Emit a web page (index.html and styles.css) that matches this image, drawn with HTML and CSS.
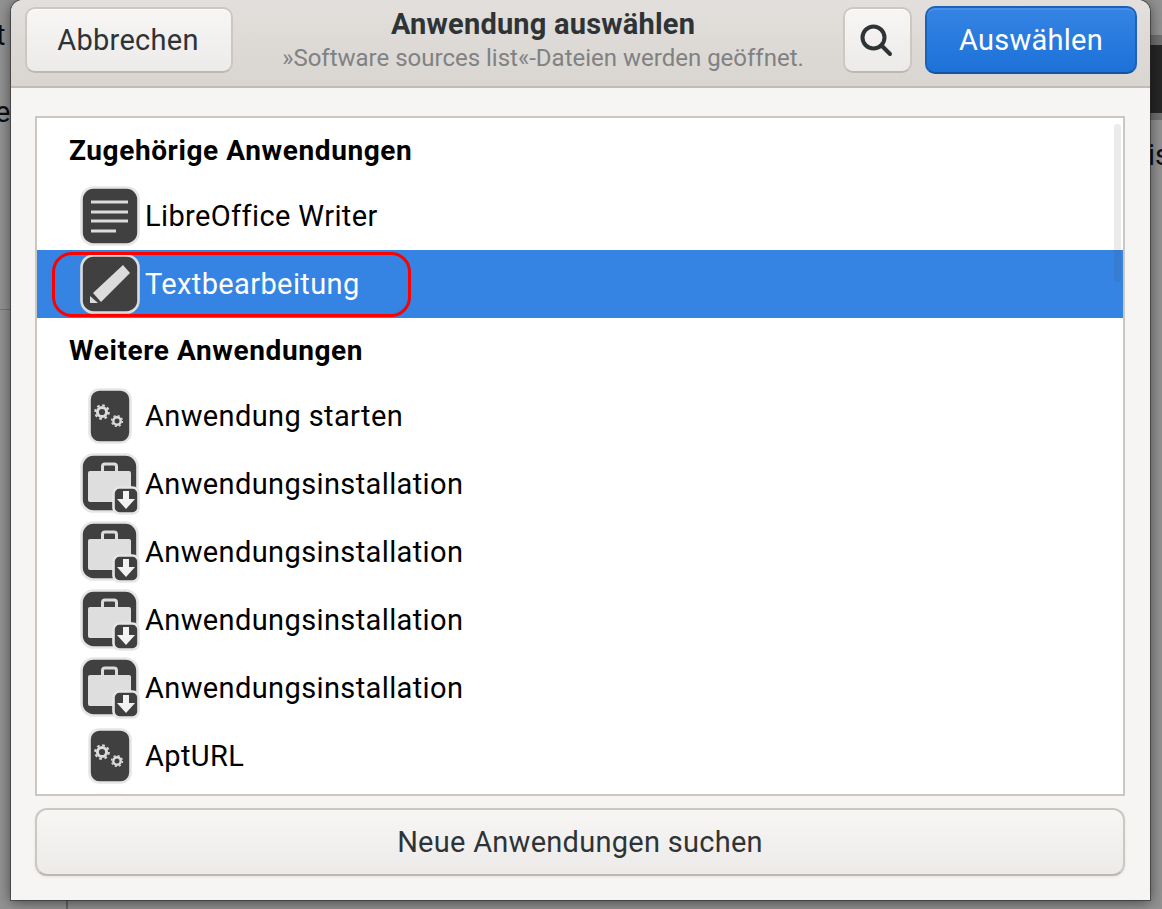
FILE: index.html
```html
<!DOCTYPE html>
<html lang="de">
<head>
  <meta charset="utf-8">
  <title>Anwendung auswählen</title>
  <link rel="stylesheet" href="styles.css">
</head>
<body>
  <!-- Fenster hinter dem Dialog -->
  <div class="backdrop">
    <span class="bg-text bg-t">t</span>
    <span class="bg-text bg-e">e</span>
    <span class="bg-text bg-is">is</span>
    <div class="bg-bar"></div>
    <div class="bg-line"></div>
    <div class="bg-vline"></div>
  </div>

  <svg class="defs" width="0" height="0">
    <symbol id="i-doc" viewBox="0 0 60 60">
      <rect x="1.5" y="1.5" width="57" height="57" rx="12" fill="#404040" stroke="#e6e6e6" stroke-width="2.600"/>
      <path d="M11 16h37M11 26h37M11 35h37M11 45h25" stroke="#dcdcdc" stroke-width="3" fill="none"/>
    </symbol>
    <symbol id="i-pencil" viewBox="0 0 60 60">
      <rect x="1.5" y="1.5" width="57" height="57" rx="12" fill="#404040" stroke="#dcdcdc" stroke-width="2.600"/>
      <path d="M13 39L43 11L50 19L21 48Z" fill="#dcdcdc"/>
      <path d="M10 42V49H18Z" fill="#dcdcdc"/>
    </symbol>
    <symbol id="i-gears" viewBox="0 0 44 56">
      <rect x="1.5" y="1.5" width="41" height="53" rx="10" fill="#404040" stroke="#e6e6e6" stroke-width="2.600"/>
      <circle cx="14" cy="24" r="4.600" fill="none" stroke="#dcdcdc" stroke-width="3"/>
      <circle cx="14" cy="24" r="6.800" fill="none" stroke="#dcdcdc" stroke-width="2" stroke-dasharray="2.700 2.640"/>
      <circle cx="29" cy="33" r="3.700" fill="none" stroke="#dcdcdc" stroke-width="2.400"/>
      <circle cx="29" cy="33" r="5.400" fill="none" stroke="#dcdcdc" stroke-width="1.400" stroke-dasharray="2.100 2.140"/>
    </symbol>
    <symbol id="i-install" viewBox="0 0 60 62">
      <rect x="1.5" y="1.5" width="56" height="57" rx="12" fill="#404040" stroke="#e6e6e6" stroke-width="2.600"/>
      <path d="M22.500 18v-4.500a2.500 2.500 0 0 1 2.500-2.500h9a2.500 2.500 0 0 1 2.500 2.500V18" fill="none" stroke="#dcdcdc" stroke-width="3"/>
      <rect x="8" y="18" width="43" height="31" rx="2" fill="#dedede"/>
      <rect x="33.500" y="34.500" width="25" height="26" rx="6" fill="#404040" stroke="#e6e6e6" stroke-width="2.600"/>
      <path d="M43 38h6v8h6L46 56L37 46h6Z" fill="#f2f2f2"/>
    </symbol>
  </svg>

  <div class="dialog">
    <header class="head">
      <button class="btn btn-cancel">Abbrechen</button>
      <div class="title-box">
        <div class="title">Anwendung auswählen</div>
        <div class="subtitle">»Software sources list«-Dateien werden geöffnet.</div>
      </div>
      <button class="btn btn-search" aria-label="Suchen">
        <svg width="34" height="34" viewBox="0 0 34 34">
          <circle cx="14.500" cy="14.500" r="11" fill="none" stroke="#2e3436" stroke-width="4"/>
          <path d="M22.500 22.500L31 31" stroke="#2e3436" stroke-width="4" stroke-linecap="round"/>
        </svg>
      </button>
      <button class="btn btn-ok">Auswählen</button>
    </header>

    <main class="content">
      <div class="list">
        <div class="list-head">Zugehörige Anwendungen</div>
        <div class="row">
          <span class="slot"><svg class="ico"><use href="#i-doc"/></svg></span>
          <span>LibreOffice Writer</span>
        </div>
        <div class="row selected">
          <span class="slot"><svg class="ico"><use href="#i-pencil"/></svg></span>
          <span>Textbearbeitung</span>
          <div class="marker"></div>
        </div>
        <div class="list-head">Weitere Anwendungen</div>
        <div class="row">
          <span class="slot"><svg class="ico-gear"><use href="#i-gears"/></svg></span>
          <span>Anwendung starten</span>
        </div>
        <div class="row">
          <span class="slot"><svg class="ico-inst"><use href="#i-install"/></svg></span>
          <span>Anwendungsinstallation</span>
        </div>
        <div class="row">
          <span class="slot"><svg class="ico-inst"><use href="#i-install"/></svg></span>
          <span>Anwendungsinstallation</span>
        </div>
        <div class="row">
          <span class="slot"><svg class="ico-inst"><use href="#i-install"/></svg></span>
          <span>Anwendungsinstallation</span>
        </div>
        <div class="row">
          <span class="slot"><svg class="ico-inst"><use href="#i-install"/></svg></span>
          <span>Anwendungsinstallation</span>
        </div>
        <div class="row">
          <span class="slot"><svg class="ico-gear"><use href="#i-gears"/></svg></span>
          <span>AptURL</span>
        </div>
        <div class="row">
          <span class="slot"><svg class="ico-next"><use href="#i-gears"/></svg></span>
        </div>
        <div class="scrollbar"></div>
      </div>
      <button class="btn btn-more">Neue Anwendungen suchen</button>
    </main>
  </div>
</body>
</html>
```

FILE: styles.css
```css
* {
  margin: 0; padding: 0; box-sizing: border-box;
}
body {
  width: 1162px; height: 909px;
  overflow: hidden;
  position: relative;
  background-color: #929292;
  font-family: Roboto, "Liberation Sans", sans-serif;
  font-size: 29px;
  color: #000;
}

/* Hintergrundfenster */
.backdrop {
  position: absolute;
  top: 0; left: 0;
  width: 100%; height: 100%;
}
.bg-text {
  position: absolute;
  font-size: 29px;
  line-height: 34px;
  color: #0a0f16;
}
.bg-t { left: -4px; top: 18px; }
.bg-e { left: -5px; top: 95px; }
.bg-is { left: 1148px; top: 138px; }
.bg-bar {
  position: absolute;
  left: 1150px; top: 35px;
  width: 12px; height: 85px;
  background-color: #262626;
  border-top: 10px solid #707070;
  border-bottom: 7px solid #707070;
}
.bg-line {
  position: absolute;
  left: 0; top: 309px;
  width: 11px; height: 1px;
  background-color: #777;
}
.bg-vline {
  position: absolute;
  left: 66px; top: 900px;
  width: 2px; height: 9px;
  background-color: #666;
}

.defs { position: absolute; }

/* Dialog */
.dialog {
  position: relative;
  margin-left: 11px;
  width: 1139px; height: 900px;
  display: flex; flex-direction: column;
  background-color: #f6f5f4;
  border-radius: 12px 12px 0 0;
  box-shadow: 0 0 0 1px rgba(40, 40, 40, 0.55), 0 2px 14px rgba(0, 0, 0, 0.55);
}
.head {
  height: 88px;
  flex: none;
  display: flex; align-items: center;
  padding: 0 13px 6px 14px;
  background: linear-gradient(#e2dfdc, #d9d5d1);
  border-bottom: 2px solid #c2bcb5;
  border-radius: 12px 12px 0 0;
}
.title-box {
  flex: 1;
  text-align: center;
  min-width: 0;
  padding-left: 10px;
}
.title {
  font-size: 29px;
  font-weight: 700;
  line-height: 35px;
  letter-spacing: .2px;
  color: #2e3436;
}
.subtitle {
  font-size: 24px;
  line-height: 32px;
  color: #7f8283;
}

/* Buttons */
.btn {
  font: inherit;
  letter-spacing: .27px;
  height: 66px;
  color: #2e3436;
  background: linear-gradient(#f7f6f5, #edebe9);
  border: 2px solid #cdc7c2;
  border-bottom-color: #bfb8b1;
  border-radius: 10px;
  box-shadow: inset 0 1px 0 #fff;
}
.btn-cancel { width: 208px; padding-right: 2px; }
.btn-search {
  width: 69px;
  margin-right: 13px;
  padding-right: 4px;
  display: flex; align-items: center; justify-content: center;
}
.btn-ok {
  width: 212px;
  height: 68px;
  color: #fff;
  background: linear-gradient(#3584e4, #1c71d8);
  border-color: #1b62b8;
  border-bottom-color: #15539e;
  box-shadow: inset 0 2px 0 #4a90e6;
}
.btn-more {
  flex: none;
  height: 68px;
  margin-top: 12px;
  border-radius: 12px;
  box-shadow: 0 1px 3px rgba(0, 0, 0, 0.08);
}

.content {
  flex: 1;
  display: flex; flex-direction: column;
  padding: 28px 25px 24px 24px;
  min-height: 0;
}

/* Liste */
.list {
  position: relative;
  flex: 1;
  min-height: 0;
  overflow: hidden;
  background-color: #fff;
  border: 2px solid #cdc7c2;
  letter-spacing: .38px;
}
.list-head {
  height: 64px;
  padding: 16px 0 0 32px;
  font-size: 28px;
  font-weight: 700;
  line-height: 33px;
  letter-spacing: .6px;
}
.row {
  position: relative;
  height: 68px;
  display: flex; align-items: center;
  padding-left: 43px;
}
.row.selected {
  background-color: #3584e4;
  color: #fff;
}
.slot {
  width: 60px; height: 60px;
  margin-right: 5px;
  display: flex; align-items: center; justify-content: center;
  flex: none;
}
.ico { width: 60px; height: 60px; }
.ico-gear { width: 44px; height: 56px; }
.ico-inst { width: 60px; height: 62px; flex: none; }
.ico-next { width: 48px; height: 62px; flex: none; }

/* rote Markierung */
.marker {
  position: absolute;
  left: 15px; top: 2px;
  width: 359px; height: 65px;
  border: 3px solid #f00;
  border-radius: 20px;
}

.scrollbar {
  position: absolute;
  top: 6px; right: 2px;
  width: 7px; height: 158px;
  border-radius: 4px;
  background-color: rgba(60, 60, 60, 0.1);
}
```
